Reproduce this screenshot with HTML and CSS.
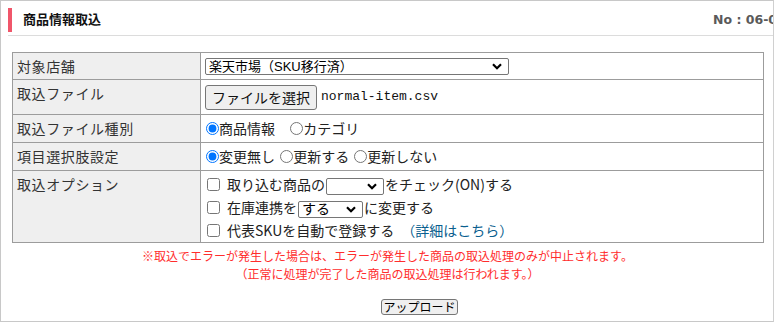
FILE: index.html
```html
<!DOCTYPE html>
<html>
<head>
    <meta charset="utf-8">
    <title>商品情報取込</title>
    <link rel="stylesheet" href="styles.css">
</head>

<body>

  <div class="panel">
    <div class="panel-head">
        <h2 class="panel-title">商品情報取込</h2>
        <span class="panel-no">No : 06-01</span>
    </div>

    <form class="import-form">
      <table class="form-table">
        <tr>
            <th>対象店舗</th>
            <td>
                <div class="field">
                    <select class="shop-select">
                        <option>楽天市場（SKU移行済）</option>
                    </select>
                </div>
            </td>
        </tr>
        <tr>
            <th>取込ファイル</th>
            <td>
                <div class="field file-field">
                    <span class="file-btn">ファイルを選択</span><span class="file-name">normal-item.csv</span>
                </div>
            </td>
        </tr>
        <tr>
            <th>取込ファイル種別</th>
            <td>
                <label class="radio wide"><input type="radio" name="kind" checked>商品情報</label>
                <label class="radio"><input type="radio" name="kind">カテゴリ</label>
            </td>
        </tr>
        <tr>
            <th>項目選択肢設定</th>
            <td>
                <label class="radio"><input type="radio" name="choice" checked>変更無し</label>
                <label class="radio"><input type="radio" name="choice">更新する</label>
                <label class="radio"><input type="radio" name="choice">更新しない</label>
            </td>
        </tr>
        <tr>
            <th>取込オプション</th>
            <td class="opt-cell">
                <div class="opt-line">
                    <input type="checkbox">取り込む商品の<select class="small-select check-select"><option></option></select>をチェック(ON)する
                </div>
                <div class="opt-line">
                    <input type="checkbox">在庫連携を<select class="small-select stock-select"><option>する</option></select>に変更する
                </div>
                <div class="opt-line">
                    <input type="checkbox">代表SKUを自動で登録する　<a href="#" class="detail-link">（詳細はこちら）</a>
                </div>
            </td>
        </tr>
      </table>

      <p class="notice">
          ※取込でエラーが発生した場合は、エラーが発生した商品の取込処理のみが中止されます。<br>
          （正常に処理が完了した商品の取込処理は行われます。）
      </p>

      <div class="actions">
          <button type="button" class="btn-upload">アップロード</button>
      </div>
    </form>
  </div>

</body>

</html>
```

FILE: styles.css
```css
html, body {
  margin: 0;
  padding: 0;
  background: #fff;
}

body {
  color: #333;
  font-family: "Noto Sans CJK JP", sans-serif;
}

.panel {
  height: 322px;
  box-sizing: border-box;
  border: 1px solid #c8c8c8;
  border-right-color: #d0d0d0;
  overflow: hidden;
}

.panel-head {
  display: flex;
  align-items: center;
  margin: 7px 0 0 7px;
  padding-bottom: 3px;
  border-bottom: 1px solid #dcdcdc;
}

.panel-title {
  flex: 1;
  margin: 0;
  height: 24px;
  line-height: 22px;
  border-left: 4px solid #f0566a;
  padding-left: 11px;
  font-size: 13px;
  font-weight: bold;
  color: #111;
}

.panel-no {
  flex: none;
  width: 60px;
  white-space: nowrap;
  font-family: "DejaVu Sans", Verdana, sans-serif;
  font-size: 12.5px;
  font-weight: bold;
  color: #5a5a5a;
  padding-bottom: 2px;
}

.import-form {
  padding: 16px 10px 0 11px;
}

.form-table {
  width: 752px;
  border-collapse: collapse;
  font-size: 14px;
  color: #222;
}

.form-table th,
.form-table td {
  border: 1px solid #9c9c9c;
  padding: 4px 4px;
  line-height: 18px;
  vertical-align: top;
  text-align: left;
}

.form-table th {
  width: 179px;
  background: #efefef;
  font-weight: normal;
  color: #333;
  letter-spacing: 0.6px;
}

.field {
  display: flex;
  align-items: center;
  height: 18px;
}

.file-field {
  height: 26px;
}

select {
  appearance: none;
  -webkit-appearance: none;
  box-sizing: border-box;
  font-family: "Liberation Sans", "Noto Sans CJK JP", sans-serif;
  font-size: 13px;
  line-height: 15px;
  color: #000;
  height: 17px;
  padding: 0 18px 0 3px;
  border: 1px solid #767676;
  border-radius: 2px;
  background: #fff url("data:image/svg+xml;utf8,<svg xmlns='http://www.w3.org/2000/svg' width='10' height='7' viewBox='0 0 10 7'><path d='M1 1.2 5 5.2 9 1.2' fill='none' stroke='black' stroke-width='2.2'/></svg>") no-repeat right 6px center;
  vertical-align: middle;
}

.shop-select {
  width: 304px;
}

.file-btn {
  display: inline-block;
  box-sizing: border-box;
  height: 25px;
  line-height: 22px;
  padding: 0 6px;
  background: #efefef;
  border: 1px solid #767676;
  border-radius: 3px;
  color: #111;
}

.file-name {
  margin-left: 4px;
  font-family: "Liberation Mono", monospace;
  font-size: 13px;
  color: #111;
}

.radio {
  display: inline-block;
  margin-right: 1px;
  line-height: 19px;
}

.radio.wide {
  margin-right: 11px;
}

.radio input {
  margin: 0 0 0 1px;
  width: 13px;
  height: 13px;
  vertical-align: -1px;
}

.form-table .opt-cell {
  padding: 2px 4px 0;
}

.opt-line {
  height: 23px;
  line-height: 23px;
  white-space: nowrap;
}

.opt-line input[type="checkbox"] {
  margin: 0 7px 0 2px;
  width: 13px;
  height: 13px;
  vertical-align: -1px;
}

.small-select {
  margin: 0 1px;
}

.check-select {
  width: 58px;
}

.stock-select {
  width: 65px;
  font-size: 14px;
}

.detail-link {
  color: #0b5f8f;
  text-decoration: none;
}

.notice {
  margin: 4px 0 0;
  text-align: center;
  font-size: 12px;
  line-height: 18px;
  color: #ff2d2d;
}

.actions {
  margin-top: 10px;
  padding-left: 64px;
  text-align: center;
}

.btn-upload {
  font-family: "Noto Sans CJK JP", sans-serif;
  font-size: 12px;
  color: #000;
  height: 16px;
  line-height: 12px;
  padding: 0 1px;
  background: #efefef;
  border: 1px solid #767676;
  border-radius: 3px;
}
```
